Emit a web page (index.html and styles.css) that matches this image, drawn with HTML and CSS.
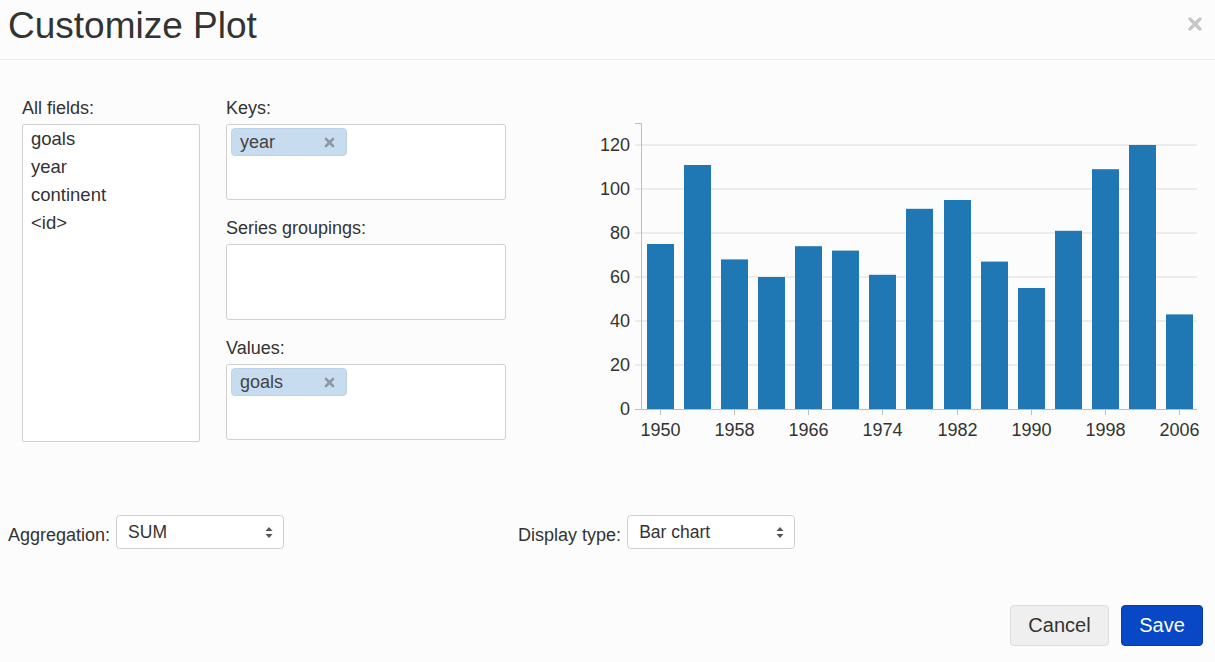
FILE: index.html
```html
<!DOCTYPE html>
<html lang="en">
<head>
<meta charset="utf-8">
<title>Customize Plot</title>
<link rel="stylesheet" href="styles.css">
</head>
<body>
<div class="header">
  <h1 class="title">Customize Plot</h1>
  <svg class="close" width="14" height="14" viewBox="0 0 14 14"><path d="M2 2 L12 12 M12 2 L2 12" stroke="#c6c6c6" stroke-width="3.2" stroke-linecap="round"/></svg>
</div>
<div class="main">
  <div class="col-fields">
    <div class="label">All fields:</div>
    <div class="fields-box">
      <div class="field">goals</div>
      <div class="field">year</div>
      <div class="field">continent</div>
      <div class="field">&lt;id&gt;</div>
    </div>
  </div>
  <div class="col-drop">
    <div class="label">Keys:</div>
    <div class="drop-box">
      <div class="tag"><span>year</span><svg class="tag-x" width="11" height="11" viewBox="0 0 11 11"><path d="M2 2 L9 9 M9 2 L2 9" stroke="#8c98a6" stroke-width="2.6" stroke-linecap="round"/></svg></div>
    </div>
    <div class="label spaced">Series groupings:</div>
    <div class="drop-box"></div>
    <div class="label spaced">Values:</div>
    <div class="drop-box">
      <div class="tag"><span>goals</span><svg class="tag-x" width="11" height="11" viewBox="0 0 11 11"><path d="M2 2 L9 9 M9 2 L2 9" stroke="#8c98a6" stroke-width="2.6" stroke-linecap="round"/></svg></div>
    </div>
  </div>
  <svg class="chart" width="625" height="340" viewBox="580 110 625 340">
    <g class="grid">
      <line x1="635" y1="365" x2="1197" y2="365"/>
      <line x1="635" y1="321" x2="1197" y2="321"/>
      <line x1="635" y1="277" x2="1197" y2="277"/>
      <line x1="635" y1="233" x2="1197" y2="233"/>
      <line x1="635" y1="189" x2="1197" y2="189"/>
      <line x1="635" y1="145" x2="1197" y2="145"/>
    </g>
    <g class="axis">
      <path d="M635 123.5 H641.5 V409.5 H1197"/>
      <line x1="635" y1="409.5" x2="641" y2="409.5"/>
      <line x1="660.5" y1="409" x2="660.5" y2="415"/>
      <line x1="734.5" y1="409" x2="734.5" y2="415"/>
      <line x1="808.5" y1="409" x2="808.5" y2="415"/>
      <line x1="882.5" y1="409" x2="882.5" y2="415"/>
      <line x1="957.5" y1="409" x2="957.5" y2="415"/>
      <line x1="1031.5" y1="409" x2="1031.5" y2="415"/>
      <line x1="1105.5" y1="409" x2="1105.5" y2="415"/>
      <line x1="1179.5" y1="409" x2="1179.5" y2="415"/>
    </g>
    <g class="bars">
      <rect x="647" y="244" width="27" height="165"/>
      <rect x="684" y="165" width="27" height="244"/>
      <rect x="721" y="259.4" width="27" height="149.6"/>
      <rect x="758" y="277" width="27" height="132"/>
      <rect x="795" y="246.2" width="27" height="162.8"/>
      <rect x="832" y="250.6" width="27" height="158.4"/>
      <rect x="869" y="274.8" width="27" height="134.2"/>
      <rect x="906" y="208.8" width="27" height="200.2"/>
      <rect x="944" y="200" width="27" height="209"/>
      <rect x="981" y="261.6" width="27" height="147.4"/>
      <rect x="1018" y="288" width="27" height="121"/>
      <rect x="1055" y="230.8" width="27" height="178.2"/>
      <rect x="1092" y="169.2" width="27" height="239.8"/>
      <rect x="1129" y="145" width="27" height="264"/>
      <rect x="1166" y="314.4" width="27" height="94.6"/>
    </g>
    <g class="ylabels">
      <text x="630" y="415">0</text>
      <text x="630" y="371">20</text>
      <text x="630" y="327">40</text>
      <text x="630" y="283">60</text>
      <text x="630" y="239">80</text>
      <text x="630" y="195">100</text>
      <text x="630" y="151">120</text>
    </g>
    <g class="xlabels">
      <text x="660.5" y="436">1950</text>
      <text x="734.5" y="436">1958</text>
      <text x="808.5" y="436">1966</text>
      <text x="882.5" y="436">1974</text>
      <text x="957.5" y="436">1982</text>
      <text x="1031.5" y="436">1990</text>
      <text x="1105.5" y="436">1998</text>
      <text x="1179.5" y="436">2006</text>
    </g>
  </svg>
</div>
<div class="controls">
  <div class="ctrl">
    <span class="ctrl-label">Aggregation:</span>
    <div class="select sel-agg"><span>SUM</span><svg class="arrows" width="8" height="13" viewBox="0 0 8 13"><path d="M4 1 L7.5 5 H0.5 Z M4 12 L7.5 8 H0.5 Z" fill="#555"/></svg></div>
  </div>
  <div class="ctrl ctrl-display">
    <span class="ctrl-label">Display type:</span>
    <div class="select sel-disp"><span>Bar chart</span><svg class="arrows" width="8" height="13" viewBox="0 0 8 13"><path d="M4 1 L7.5 5 H0.5 Z M4 12 L7.5 8 H0.5 Z" fill="#555"/></svg></div>
  </div>
</div>
<div class="footer">
  <button class="btn btn-cancel">Cancel</button>
  <button class="btn btn-save">Save</button>
</div>
</body>
</html>
```
FILE: styles.css
```css
html, body {
  margin: 0;
  padding: 0;
}
body {
  width: 1215px;
  height: 662px;
  overflow: hidden;
  background: #fcfcfc;
  color: #333;
  font-family: "Liberation Sans", Arial, sans-serif;
}
.header {
  box-sizing: border-box;
  height: 60px;
  border-bottom: 1px solid #ebebeb;
  display: flex;
  justify-content: space-between;
  align-items: flex-start;
  padding: 7px 13px 0 8px;
}
.title {
  margin: 0;
  font-size: 37px;
  line-height: 37px;
  font-weight: normal;
  color: #333;
}
.close {
  margin-top: 10px;
}
.main {
  display: flex;
  align-items: flex-start;
  padding: 37px 0 0 22px;
}
.label {
  font-size: 18px;
  line-height: 22px;
  margin-bottom: 5px;
  color: #333;
}
.label.spaced {
  margin-top: 17px;
}
.col-fields {
  width: 178px;
}
.fields-box {
  box-sizing: border-box;
  height: 318px;
  border: 1px solid #cfcfcf;
  border-radius: 2px;
  background: #fff;
  padding: 0 8px;
}
.field {
  font-size: 18.5px;
  line-height: 28px;
  color: #333;
}
.col-drop {
  width: 280px;
  margin-left: 26px;
}
.drop-box {
  box-sizing: border-box;
  height: 76px;
  border: 1px solid #cfcfcf;
  border-radius: 3px;
  background: #fff;
  padding: 3px 4px;
}
.tag {
  box-sizing: border-box;
  width: 116px;
  height: 28px;
  border-radius: 4px;
  background: #c8dcef;
  border: 1px solid #bed3e8;
  display: flex;
  align-items: center;
  justify-content: space-between;
  padding: 0 11px 0 8px;
  font-size: 18px;
  color: #444;
}
.chart {
  display: block;
  margin-left: 74px;
  margin-top: 13px;
}
.grid line {
  stroke: #dcdcdc;
  stroke-width: 1;
}
.axis path, .axis line {
  fill: none;
  stroke: #bdbdbd;
  stroke-width: 1;
}
.bars rect {
  fill: #1f77b4;
}
.ylabels text, .xlabels text {
  font-family: "Liberation Sans", Arial, sans-serif;
  font-size: 18px;
  fill: #333;
}
.ylabels text {
  text-anchor: end;
}
.xlabels text {
  text-anchor: middle;
}
.controls {
  display: flex;
  align-items: center;
  margin-top: 65px;
  padding-left: 8px;
}
.ctrl {
  display: flex;
  align-items: center;
}
.ctrl-display {
  margin-left: 234px;
}
.ctrl-label {
  font-size: 18px;
  padding-top: 7px;
  margin-right: 6px;
  color: #333;
}
.select {
  box-sizing: border-box;
  height: 34px;
  border: 1px solid #cfcfcf;
  border-radius: 4px;
  background: #fff;
  display: flex;
  align-items: center;
  justify-content: space-between;
  padding: 0 10px 0 11px;
  font-size: 17.5px;
  color: #333;
}
.sel-agg {
  width: 168px;
}
.sel-disp {
  width: 168px;
}
.footer {
  display: flex;
  justify-content: flex-end;
  gap: 12px;
  margin-top: 56px;
  padding-right: 12px;
}
.btn {
  box-sizing: border-box;
  height: 41px;
  border-radius: 4px;
  font-family: "Liberation Sans", Arial, sans-serif;
  font-size: 20px;
  padding: 0;
}
.btn-cancel {
  width: 99px;
  background: #efefef;
  border: 1px solid #dcdcdc;
  color: #333;
}
.btn-save {
  width: 82px;
  background: #0847c5;
  border: 1px solid #063ba8;
  color: #fff;
}
```
